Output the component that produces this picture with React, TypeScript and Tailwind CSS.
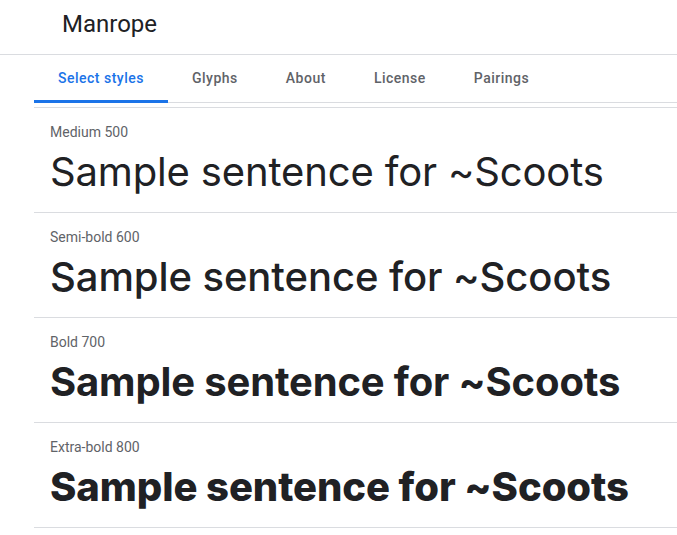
import React from 'react';

const tabs = ['Select styles', 'Glyphs', 'About', 'License', 'Pairings'];

const styles = [
  { label: 'Medium 500', weight: 'font-normal tracking-[-0.15px]' },
  { label: 'Semi-bold 600', weight: 'font-medium tracking-[-0.08px]' },
  { label: 'Bold 700', weight: 'font-bold tracking-[-0.15px]' },
  { label: 'Extra-bold 800', weight: 'font-extrabold tracking-[-0.08px]' },
];

export default function App() {
  return (
    <div className="min-h-screen bg-white font-['Roboto',sans-serif]">
      <header className="h-[55px] border-b border-[#dadce0] pt-[10px] pl-[62px]">
        <h1 className="text-[24px] leading-[28px] text-[#202124] font-normal">Manrope</h1>
      </header>

      <nav className="ml-[34px] flex border-b border-[#dadce0]">
        {tabs.map((t, i) => (
          <div
            key={t}
            className={`relative h-[47px] px-6 pt-[13px] text-[14px] leading-5 font-medium tracking-[0.5px] ${
              i === 0 ? 'text-[#1a73e8]' : 'text-[#5f6368]'
            }`}
          >
            {t}
            {i === 0 && <span className="absolute left-0 right-0 bottom-[-1px] h-[3px] bg-[#1a73e8]" />}
          </div>
        ))}
      </nav>

      <div className="ml-[34px] mt-[4px] border-t border-[#dadce0]">
        {styles.map((s) => (
          <div key={s.label} className="border-b border-[#dadce0] pl-[16px] pt-[14px] pb-[16px]">
            <div className="text-[14px] leading-5 text-[#5f6368]">{s.label}</div>
            <div className={`mt-[6px] text-[40px] leading-[48px] text-[#202124] font-['Inter',sans-serif] ${s.weight}`}>
              Sample sentence for ~Scoots
            </div>
          </div>
        ))}
      </div>
    </div>
  );
}
